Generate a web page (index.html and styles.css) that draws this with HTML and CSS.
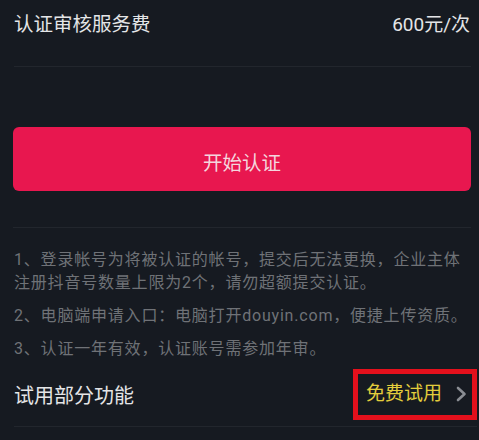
FILE: index.html
```html
<!DOCTYPE html>
<html lang="zh">
<head>
<meta charset="utf-8">
<link rel="stylesheet" href="styles.css">
</head>
<body>
<div class="page">
  <div class="fee-row">
    <span class="label">认证审核服务费</span>
    <span class="price">600元/次</span>
  </div>
  <div class="btn-wrap">
    <div class="btn">开始认证</div>
  </div>
  <div class="notes">
    <p>1、登录帐号为将被认证的帐号，提交后无法更换，企业主体注册抖音号数量上限为2个，请勿超额提交认证。</p>
    <p>2、电脑端申请入口：电脑打开douyin.com，便捷上传资质。</p>
    <p>3、认证一年有效，认证账号需参加年审。</p>
  </div>
  <div class="trial-row">
    <span class="label">试用部分功能</span>
    <span class="trial-box">
      <span class="trial-text">免费试用</span>
      <svg class="chev" width="12" height="18" viewBox="0 0 12 18"><polyline points="3,3 9.5,9 3,15" fill="none" stroke="#8a8d93" stroke-width="2.6" stroke-linecap="round" stroke-linejoin="round"/></svg>
    </span>
  </div>
</div>
</body>
</html>
```

FILE: styles.css
```css
html, body {
  margin: 0;
  padding: 0;
  background: #161a21;
}
body {
  width: 479px;
  height: 440px;
  overflow: hidden;
  font-family: Roboto, "Noto Sans CJK SC", sans-serif;
}
.page {
  display: flex;
  flex-direction: column;
}
.fee-row {
  display: flex;
  justify-content: space-between;
  align-items: center;
  margin: 0 8px 0 14px;
  padding: 11px 0 27px;
  height: 28px;
  border-bottom: 1px solid #22262d;
}
.label {
  color: #e4e5e7;
  font-size: 19.5px;
  line-height: 28px;
}
.price {
  color: #e4e5e7;
  font-size: 19px;
  line-height: 28px;
  margin-right: 1px;
}
.btn-wrap {
  margin: 0 8px 0 13px;
  padding: 60px 0 36px;
  border-bottom: 1px solid #22262d;
}
.btn {
  height: 64px;
  border-radius: 6px;
  background: #e8174f;
  color: #f4d6de;
  font-size: 19.5px;
  display: flex;
  align-items: center;
  justify-content: center;
  padding-top: 4px;
  box-sizing: border-box;
}
.notes {
  margin: 0 8px 0 14px;
  padding-top: 20px;
}
.notes p {
  margin: 0 0 10px;
  color: #6f7277;
  font-size: 16px;
  line-height: 23px;
  letter-spacing: 0.8px;
}
.trial-row {
  display: flex;
  justify-content: space-between;
  align-items: center;
  margin: -8px 2px 0 14px;
  height: 64px;
  border-bottom: 1px solid #22262d;
}
.trial-row .label {
  font-size: 20px;
  padding-top: 4px;
}
.trial-box {
  display: flex;
  align-items: center;
  border: 5px solid #e4101c;
  height: 41px;
  width: 106px;
  padding-left: 8px;
  box-sizing: content-box;
}
.trial-text {
  color: #e3cd3c;
  font-size: 19px;
  line-height: 28px;
}
.chev {
  margin-left: 13px;
}
```
